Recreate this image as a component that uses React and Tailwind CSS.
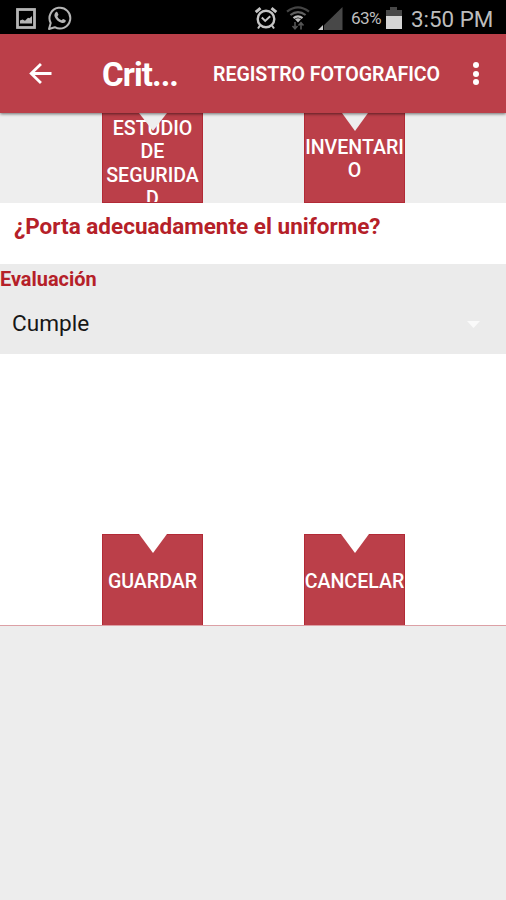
import React from "react";

function StatusBar() {
  return (
    <div className="flex h-[34px] shrink-0 items-center bg-black text-[#bdbdbd]">
      <svg className="ml-[16px] mt-[2px] h-[21px] w-[20px] shrink-0" viewBox="0 0 20 21" fill="none">
        <rect x="1.5" y="1.5" width="17" height="18" stroke="#b5b5b5" strokeWidth="2.8" />
        <path d="M4 15.5v-3l2.6-1 2.4 1.3 3-3 1.5.4L16 8v7.5z" fill="#b5b5b5" />
      </svg>
      <svg className="ml-[11px] mt-[1px] h-[26px] w-[25px] shrink-0" viewBox="0 0 25 26" fill="none">
        <path d="M2 24l1.7-6A10.4 10.4 0 1 1 7.8 22.2z" stroke="#b5b5b5" strokeWidth="2" strokeLinejoin="round" />
        <path d="M8.7 7.2c.6-.6 1.4-.5 1.7.1l1 2.3c.2.5-.8 1.5-1 1.8.8 1.8 2.1 3 4.1 3.8.4-.1 1.2-1.5 1.7-1.3l2.2 1.1c.7.4.3 1.6-.3 2.3-.9.9-2.4 1-3.8.5-3.2-1.1-5.2-3-6.6-6-.7-1.6-.2-3.4 1-4.6z" fill="#b5b5b5" />
      </svg>
      <svg className="ml-[182px] mt-[2px] h-[24px] w-[24px] shrink-0" viewBox="0 0 24 24" fill="none" stroke="#c4c4c4">
        <circle cx="12" cy="13" r="8.3" strokeWidth="2.4" />
        <path d="M1.7 6.2l4.8-4M22.3 6.2l-4.8-4" strokeWidth="3" />
        <path d="M7.8 11.5l3.4 3.4 5-4.7M6 19.5l-2 3M18 19.5l2 3" strokeWidth="2" />
      </svg>
      <svg className="ml-[8px] mt-[2px] h-[26px] w-[24px] shrink-0" viewBox="0 0 24 26" fill="none">
        <path d="M1 6.7Q12-2 23 6.7" stroke="#444" strokeWidth="2.2" />
        <path d="M4.4 10Q12 4.2 19.6 10" stroke="#606060" strokeWidth="2.2" />
        <path d="M7.5 13.2Q12 9.5 16.5 13.2" stroke="#bbb" strokeWidth="2.2" />
        <path d="M9 14.2q3-2 6 0l-3 3.3z" fill="#bbb" />
        <path d="M9 17v6.5M6.5 21L9 23.7l2.5-2.7M15 24.5V18M12.5 20.5l2.5-2.7 2.5 2.7" stroke="#555" strokeWidth="1.6" />
      </svg>
      <svg className="ml-[8px] mt-[2px] h-[24px] w-[26px] shrink-0" viewBox="0 0 26 24">
        <path d="M1 24L24.5 1v23z" fill="#484848" />
        <path d="M0 24l5-5v5z" fill="#ccc" />
        <path d="M5.5 18v6" stroke="#000" strokeWidth="1" />
      </svg>
      <span className="ml-[7px] w-[33px] pt-[3px] text-[17.2px] leading-none tracking-[-0.6px]">63%</span>
      <svg className="ml-[2px] mt-[2px] h-[22px] w-[16px] shrink-0" viewBox="0 0 16 22">
        <path d="M0 3h4V0h7v3h5v19H0z" fill="#484848" />
        <path d="M0 9h16v13H0z" fill="#d4d4d4" />
      </svg>
      <span className="ml-[9px] whitespace-nowrap pt-[5px] text-[22.4px] leading-none">3:50 PM</span>
    </div>
  );
}

function AppBar() {
  return (
    <header className="relative z-10 flex h-[79px] shrink-0 items-center bg-[#bb3f49] text-white shadow-[0_1px_3px_rgba(0,0,0,0.55)]">
      <svg className="ml-[28px] h-[23px] w-[24px] shrink-0" viewBox="0 0 24 24" fill="none" stroke="#fff" strokeWidth="2.9">
        <path d="M13 2L2.8 12 13 22M2.6 12H24" />
      </svg>
      <h1 className="ml-[50px] w-[111px] pt-[1px] text-[33px] font-bold leading-none tracking-[-0.9px]">Crit...</h1>
      <span className="whitespace-nowrap pt-[2px] text-[19.6px] font-semibold leading-none tracking-[-0.05px]">REGISTRO FOTOGRAFICO</span>
      <div className="ml-auto mr-[27px] flex flex-col gap-[2.5px]">
        <i className="size-[6px] rounded-full bg-white" />
        <i className="size-[6px] rounded-full bg-white" />
        <i className="size-[6px] rounded-full bg-white" />
      </div>
    </header>
  );
}

function Notch({ className, fill }) {
  return (
    <svg className={"absolute " + className} viewBox="0 0 28 19" preserveAspectRatio="none">
      <path d="M0 0h28L14 19z" fill={fill} />
    </svg>
  );
}

function Tile({ children, className, notch, fill }) {
  return (
    <div className="relative w-[101px]">
      <button className={"flex w-[101px] justify-center overflow-hidden border-x border-[#b22a36] bg-[#bb3f49] text-center text-[19.6px] font-medium leading-[23.3px] text-white " + className}>
        <span>{children}</span>
      </button>
      <Notch className={notch} fill={fill} />
    </div>
  );
}

export default function App() {
  return (
    <div className="flex h-[900px] w-[506px] flex-col overflow-hidden bg-[#ededed] font-['Roboto','Liberation_Sans',sans-serif]">
      <StatusBar />
      <AppBar />
      <div className="flex h-[90px] shrink-0 gap-[101px] bg-[#eeeeee] pl-[102px]">
        <Tile className="h-[90px] border-b pt-[4px]" notch="left-[37px] top-0 h-[18px] w-[28px]" fill="#eeeeee">
          ESTUDIO<br />DE<br />SEGURIDA<br />D
        </Tile>
        <Tile className="h-[90px] border-b pt-[23px]" notch="left-[38px] top-0 h-[18px] w-[26px]" fill="#eeeeee">
          INVENTARI<br />O
        </Tile>
      </div>
      <div className="h-[61px] shrink-0 bg-white pl-[14px] pt-[10px]">
        <p className="text-[22.5px] font-bold leading-[27px] text-[#b52028]">¿Porta adecuadamente el uniforme?</p>
      </div>
      <div className="h-[90px] shrink-0 bg-[#ebebeb]">
        <p className="pt-[4px] text-[19.9px] font-bold leading-[23px] text-[#b52028]">Evaluación</p>
        <div className="flex items-center justify-between pl-[12px] pr-[26px] pt-[19px]">
          <span className="text-[22.6px] leading-[28px] text-[#171717]">Cumple</span>
          <svg className="h-[7px] w-[13px]" viewBox="0 0 13 7"><path d="M0 0h13L6.5 7z" fill="#fafafa" /></svg>
        </div>
      </div>
      <div className="flex h-[272px] shrink-0 items-end gap-[101px] border-b border-b-[#dca0a5] bg-white pl-[102px]">
        <Tile className="h-[91px] border-t pt-[35px]" notch="left-[37px] top-0 h-[19px] w-[28px]" fill="#fff">GUARDAR</Tile>
        <Tile className="h-[91px] border-t pt-[35px]" notch="left-[37px] top-0 h-[19px] w-[28px]" fill="#fff">CANCELAR</Tile>
      </div>
    </div>
  );
}
